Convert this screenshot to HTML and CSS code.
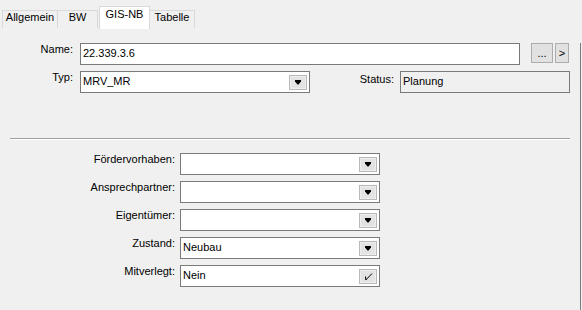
FILE: index.html
```html
<!DOCTYPE html>
<html lang="de">
<head>
  <meta charset="UTF-8" />
  <title>GIS-NB</title>
  <link rel="stylesheet" href="styles.css">
</head>
<body>

  <div class="tabs">
    <div class="tab tab-allgemein">Allgemein</div>
    <div class="tab tab-bw">BW</div>
    <div class="tab tab-active">GIS-NB</div>
    <div class="tab tab-tabelle">Tabelle</div>
  </div>

  <div class="panel">
    <div class="head">
      <div class="row">
        <div class="label">Name:</div>
        <div class="field name-field"><span class="value">22.339.3.6</span></div>
        <button class="btn btn-more">...</button>
        <button class="btn btn-next">&gt;</button>
      </div>
      <div class="row">
        <div class="label">Typ:</div>
        <div class="field combo typ-field">
          <span class="value">MRV_MR</span>
          <span class="drop">
            <svg width="6" height="5" viewBox="0 0 6 5"><path d="M0 0H6V1.5L3.5 4.5H2.5L0 1.5Z" fill="#000"/></svg>
          </span>
        </div>
        <div class="status-label">Status:</div>
        <div class="field status-field"><span class="value">Planung</span></div>
      </div>
    </div>

    <div class="sep"></div>

    <div class="details">
      <div class="label">Fördervorhaben:</div>
      <div class="field combo">
        <span class="value"></span>
        <span class="drop"><svg width="6" height="5" viewBox="0 0 6 5"><path d="M0 0H6V1.5L3.5 4.5H2.5L0 1.5Z" fill="#000"/></svg></span>
      </div>

      <div class="label">Ansprechpartner:</div>
      <div class="field combo">
        <span class="value"></span>
        <span class="drop"><svg width="6" height="5" viewBox="0 0 6 5"><path d="M0 0H6V1.5L3.5 4.5H2.5L0 1.5Z" fill="#000"/></svg></span>
      </div>

      <div class="label">Eigentümer:</div>
      <div class="field combo">
        <span class="value"></span>
        <span class="drop"><svg width="6" height="5" viewBox="0 0 6 5"><path d="M0 0H6V1.5L3.5 4.5H2.5L0 1.5Z" fill="#000"/></svg></span>
      </div>

      <div class="label">Zustand:</div>
      <div class="field combo">
        <span class="value">Neubau</span>
        <span class="drop"><svg width="6" height="5" viewBox="0 0 6 5"><path d="M0 0H6V1.5L3.5 4.5H2.5L0 1.5Z" fill="#000"/></svg></span>
      </div>

      <div class="label">Mitverlegt:</div>
      <div class="field combo">
        <span class="value">Nein</span>
        <span class="drop"><svg width="9" height="9" viewBox="0 0 9 9"><polyline points="1.5,4.5 1.8,8 8,1.5" fill="none" stroke="#000" stroke-width="1"/></svg></span>
      </div>
    </div>
  </div>

</body>
</html>
```

FILE: styles.css
```css
body {
  margin: 0;
  background: #f0f0f0;
  color: #000;
  font-family: "Liberation Sans", Arial, sans-serif;
  font-size: 11px;
  overflow: hidden;
}

/* Tabs */
.tabs {
  display: flex;
  align-items: flex-end;
  height: 28px;
  padding-left: 2px;
}

.tab {
  box-sizing: border-box;
  height: 18px;
  border: 1px solid #d9d9d9;
  border-bottom: none;
  background: #f0f0f0;
  line-height: 13px;
  text-align: center;
}

.tab-allgemein { width: 56px; }
.tab-bw { width: 41px; margin-left: -1px; }
.tab-tabelle { width: 46px; margin-left: -1px; }

.tab-active {
  position: relative;
  width: 51px;
  height: 23px;
  margin-left: 1px;
  margin-bottom: -1px;
  padding-top: 1px;
  background: #fff;
}

/* Page */
.panel {
  box-sizing: border-box;
  width: 581px;
  height: 267px;
  margin-top: 15px;
  border-right: 1px solid #7a7a7a;
}

.row {
  display: flex;
  align-items: flex-start;
  height: 22px;
}

.row + .row {
  margin-top: 6px;
}

.label {
  line-height: 12px;
  text-align: right;
}

.head .label {
  width: 73px;
  margin-right: 7px;
}

.field {
  box-sizing: border-box;
  height: 22px;
  border: 1px solid #7a7a7a;
  background: #fff;
  padding: 0 2px;
}

.value {
  line-height: 18px;
}

.combo {
  display: flex;
  align-items: flex-start;
}

.drop {
  box-sizing: border-box;
  width: 18px;
  height: 15px;
  margin-top: 3px;
  margin-left: auto;
  border: 1px solid #b9b9b9;
  background: #e3e3e3;
  box-shadow: inset 0 0 0 1px #eeeeee;
  display: flex;
  align-items: center;
  justify-content: center;
}

.name-field { width: 440px; }
.typ-field { width: 230px; }

.status-label {
  width: 84px;
  margin-right: 6px;
  line-height: 12px;
  text-align: right;
  margin-top: 2px;
}

.status-field {
  width: 170px;
  background: #f0f0f0;
}

.btn {
  box-sizing: border-box;
  height: 20px;
  padding: 0;
  border: 1px solid #adadad;
  background: #e1e1e1;
  font-family: inherit;
  font-size: 11px;
  line-height: 16px;
  color: #000;
}

.btn-more {
  width: 22px;
  margin-left: 11px;
}

.btn-next {
  width: 14px;
  margin-left: 2px;
}

.sep {
  width: 560px;
  margin: 45px 10px 0;
  border-top: 1px solid #a0a0a0;
  border-bottom: 1px solid #fff;
}

.details {
  display: grid;
  grid-template-columns: 175px 200px;
  grid-auto-rows: 22px;
  column-gap: 5px;
  row-gap: 6px;
  margin-top: 13px;
}
```
